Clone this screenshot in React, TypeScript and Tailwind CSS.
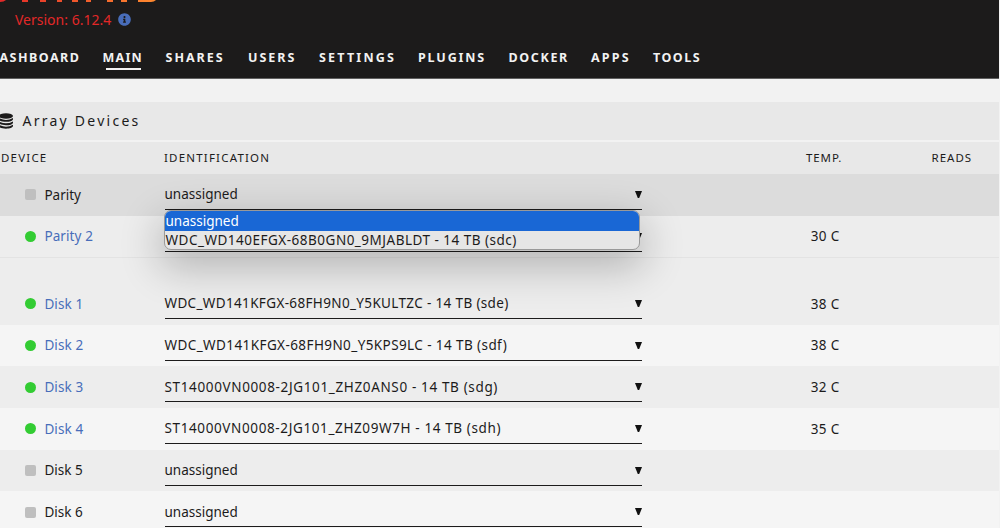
import React from 'react';
import { FaInfoCircle } from 'react-icons/fa';

type Device = {
  name: string;
  id: string;
  temp?: string;
  spacing?: string;
};

const nav = [
  { label: 'DASHBOARD', cls: 'w-[113.5px] -ml-[11px] tracking-[1.5px]' },
  { label: 'MAIN', cls: 'w-[63px] tracking-[1.25px]' },
  { label: 'SHARES', cls: 'w-[82.5px] tracking-[2px]' },
  { label: 'USERS', cls: 'w-[71px] tracking-[2px]' },
  { label: 'SETTINGS', cls: 'w-[99px] tracking-[2.2px]' },
  { label: 'PLUGINS', cls: 'w-[90.5px] tracking-[1.85px]' },
  { label: 'DOCKER', cls: 'w-[82.5px] tracking-[1.65px]' },
  { label: 'APPS', cls: 'w-[62px] tracking-[2.2px]' },
  { label: 'TOOLS', cls: 'w-[60px] tracking-[1.5px]' },
];

const parity: Device[] = [
  { name: 'Parity', id: 'unassigned' },
  { name: 'Parity 2', id: '', temp: '30 C' },
];

const disks: Device[] = [
  { name: 'Disk 1', id: 'WDC_WD141KFGX-68FH9N0_Y5KULTZC - 14 TB (sde)', temp: '38 C', spacing: 'tracking-[0.35px]' },
  { name: 'Disk 2', id: 'WDC_WD141KFGX-68FH9N0_Y5KPS9LC - 14 TB (sdf)', temp: '38 C', spacing: 'tracking-[0.41px]' },
  { name: 'Disk 3', id: 'ST14000VN0008-2JG101_ZHZ0ANS0 - 14 TB (sdg)', temp: '32 C', spacing: 'tracking-[0.64px]' },
  { name: 'Disk 4', id: 'ST14000VN0008-2JG101_ZHZ09W7H - 14 TB (sdh)', temp: '35 C', spacing: 'tracking-[0.62px]' },
  { name: 'Disk 5', id: 'unassigned' },
  { name: 'Disk 6', id: 'unassigned' },
];

function DatabaseIcon() {
  return (
    <svg viewBox="0 0 14 16" className="-ml-[1.5px] h-4 w-[14px] shrink-0 fill-[#1c1b1b]">
      <ellipse cx="7" cy="3" rx="7" ry="2.8" />
      <path d="M0 5q7 3.8 14 0v1.3c0 3.4-14 3.4-14 0z" />
      <path d="M0 8.4q7 3.8 14 0v1.3c0 3.4-14 3.4-14 0z" />
      <path d="M0 11.8q7 3.8 14 0v1.3c0 3.4-14 3.4-14 0z" />
    </svg>
  );
}

function DeviceRow({ device, className, children }: { device: Device; className: string; children?: React.ReactNode }) {
  const active = Boolean(device.temp);
  return (
    <div className={`flex h-[41.7px] shrink-0 ${className}`}>
      <div className="flex w-[164.5px] items-center pl-[25.4px]">
        <span className={active ? 'size-[11px] rounded-full bg-[#33cc33]' : 'size-[11px] rounded-[2px] bg-[#bfbfbf]'} />
        <span className={`ml-2 ${active ? 'tracking-[0.1px] text-[#486dba]' : 'text-[#1c1b1b]'}`}>{device.name}</span>
      </div>
      <div className="relative flex h-9 w-[477.5px] items-center justify-between border-b border-[#1c1b1b] pt-1.5">
        <span className={`whitespace-nowrap ${device.spacing ?? ''}`}>{device.id}</span>
        <svg viewBox="0 0 7 7" className="h-[7px] w-[7px] fill-[#111]">
          <path d="M0 0h7L4.2 7H2.8z" />
        </svg>
        {children}
      </div>
      <div className="flex w-[197.5px] items-center justify-end tracking-[0.3px]">{device.temp}</div>
    </div>
  );
}

function SelectMenu() {
  return (
    <div className="absolute top-9 -left-px z-10 h-10 w-[476.5px] overflow-hidden rounded-[7px] border border-[#999] bg-[#e6e6e6] whitespace-nowrap shadow-[0_14px_40px_4px_rgba(0,0,0,0.24)]">
      <div className="h-[20px] bg-[#1967d5] pl-px leading-[20px] text-white">unassigned</div>
      <div className="pl-px leading-[18px] tracking-[0.5px]">WDC_WD140EFGX-68B0GN0_9MJABLDT - 14 TB (sdc)</div>
    </div>
  );
}

export default function App() {
  return (
    <div className="flex h-[528px] w-[1000px] flex-col overflow-hidden bg-[#f2f2f2] font-['Noto_Sans',sans-serif] text-[13.5px] text-[#1c1b1b]">
      <header className="h-[79px] w-[999px] shrink-0 overflow-hidden border-b border-[#606060] bg-[#1c1b1b]">
        <svg viewBox="0 0 170 5" className="block h-[5px] w-[170px]">
          <defs>
            <linearGradient id="brand" x1="0" x2="160" gradientUnits="userSpaceOnUse">
              <stop offset="0" stopColor="#e22828" />
              <stop offset="1" stopColor="#ff8c2f" />
            </linearGradient>
          </defs>
          <path
            fill="url(#brand)"
            d="M0 0h6Q4 2 0 2zM22 0h6v2h-6zM40 0h6v2h-6zM57 0h5v2h-5zM72 0h6v2h-6zM86 0h5v2h-5zM107 0h6v2h-6zM121 0h6v2h-6zM138 0h18q-2 2-5 2h-13z"
          />
        </svg>
        <div className="flex h-[30px] items-center pl-[15px] text-sm text-[#e22828]">
          <span>Version: 6.12.4</span>
          <FaInfoCircle className="mb-px ml-[7px] size-[13px] text-[#486dba]" />
        </div>
        <nav className="mt-3 flex text-[12.5px] leading-[21px] font-bold text-[#f2f2f2]">
          {nav.map((item) => (
            <div key={item.label} className={`shrink-0 ${item.cls}`}>
              {item.label}
              {item.label === 'MAIN' && <div className="ml-[3.4px] h-0.5 w-[35px] bg-[#f2f2f2]" />}
            </div>
          ))}
        </nav>
      </header>

      <main className="mt-[23px] w-[999px]">
        <div className="flex h-[38px] items-center bg-[#e8e8e8]">
          <DatabaseIcon />
          <h2 className="ml-[10px] text-sm leading-4 tracking-[2.25px]">Array Devices</h2>
        </div>
        <div className="mt-0.5 flex h-8 items-center bg-[#e8e8e8] text-[11.5px] tracking-[1.2px]">
          <span className="w-[164px] pl-px">DEVICE</span>
          <span className="w-[642px]">IDENTIFICATION</span>
          <span className="w-[125.5px] tracking-[0.9px]">TEMP.</span>
          <span className="tracking-[1px]">READS</span>
        </div>
        <DeviceRow device={parity[0]} className="bg-[#dcdcdc]">
          <SelectMenu />
        </DeviceRow>
        <DeviceRow device={parity[1]} className="bg-[#ededed]" />
        <div className="h-[25.5px] border-t border-[#e3e3e3] bg-[#ededed]" />
        {disks.map((disk, i) => (
          <DeviceRow key={disk.name} device={disk} className={i % 2 ? 'bg-[#f5f5f5]' : 'bg-[#ededed]'} />
        ))}
      </main>
    </div>
  );
}
